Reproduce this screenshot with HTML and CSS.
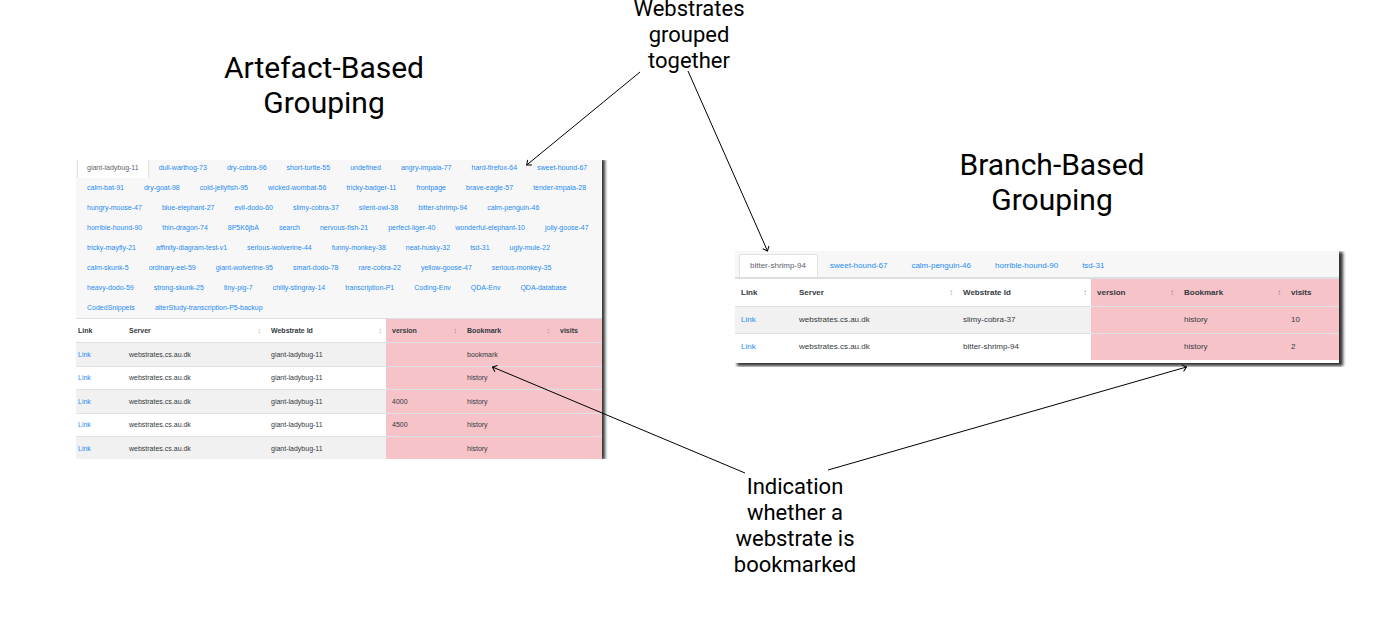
FILE: index.html
```html
<!DOCTYPE html>
<html lang="en">
<head>
<meta charset="utf-8">
<title>Webstrate grouping</title>
<link rel="stylesheet" href="styles.css">
</head>
<body>
<main class="canvas">
  <h1 class="title title-artefact">Artefact-Based<br>Grouping</h1>
  <h1 class="title title-branch">Branch-Based<br>Grouping</h1>

  <section class="panel panel-artefact">
    <nav class="tabs">
      <a class="active" href="#">giant-ladybug-11</a><a href="#">dull-warthog-73</a><a href="#">dry-cobra-96</a><a href="#">short-turtle-55</a><a href="#">undefined</a><a href="#">angry-impala-77</a><a href="#">hard-firefox-64</a><a href="#">sweet-hound-67</a>
      <a href="#">calm-bat-91</a><a href="#">dry-goat-98</a><a href="#">cold-jellyfish-95</a><a href="#">wicked-wombat-56</a><a href="#">tricky-badger-11</a><a href="#">frontpage</a><a href="#">brave-eagle-57</a><a href="#">tender-impala-28</a>
      <a href="#">hungry-moose-47</a><a href="#">blue-elephant-27</a><a href="#">evil-dodo-60</a><a href="#">slimy-cobra-37</a><a href="#">silent-owl-38</a><a href="#">bitter-shrimp-94</a><a href="#">calm-penguin-46</a>
      <a href="#">horrible-hound-90</a><a href="#">thin-dragon-74</a><a href="#">8P5K6jbA</a><a href="#">search</a><a href="#">nervous-fish-21</a><a href="#">perfect-liger-40</a><a href="#">wonderful-elephant-10</a><a href="#">jolly-goose-47</a>
      <a href="#">tricky-mayfly-21</a><a href="#">affinity-diagram-test-v1</a><a href="#">serious-wolverine-44</a><a href="#">funny-monkey-38</a><a href="#">neat-husky-32</a><a href="#">tsd-31</a><a href="#">ugly-mule-22</a>
      <a href="#">calm-skunk-5</a><a href="#">ordinary-eel-59</a><a href="#">giant-wolverine-95</a><a href="#">smart-dodo-78</a><a href="#">rare-cobra-22</a><a href="#">yellow-goose-47</a><a href="#">serious-monkey-35</a>
      <a href="#">heavy-dodo-59</a><a href="#">strong-skunk-25</a><a href="#">tiny-pig-7</a><a href="#">chilly-stingray-14</a><a href="#">transcription-P1</a><a href="#">Coding-Env</a><a href="#">QDA-Env</a><a href="#">QDA-database</a>
      <a href="#">CodedSnippets</a><a href="#">alterStudy-transcription-P5-backup</a>
    </nav>
    <table>
      <colgroup><col class="c-link"><col class="c-server"><col class="c-id"><col class="c-version"><col class="c-bookmark"><col></colgroup>
      <thead><tr><th>Link</th><th class="sort">Server</th><th class="sort">Webstrate Id</th><th class="sort">version</th><th class="sort">Bookmark</th><th>visits</th></tr></thead>
      <tbody>
        <tr><td><a href="#">Link</a></td><td>webstrates.cs.au.dk</td><td>giant-ladybug-11</td><td></td><td>bookmark</td><td></td></tr>
        <tr><td><a href="#">Link</a></td><td>webstrates.cs.au.dk</td><td>giant-ladybug-11</td><td></td><td>history</td><td></td></tr>
        <tr><td><a href="#">Link</a></td><td>webstrates.cs.au.dk</td><td>giant-ladybug-11</td><td>4000</td><td>history</td><td></td></tr>
        <tr><td><a href="#">Link</a></td><td>webstrates.cs.au.dk</td><td>giant-ladybug-11</td><td>4500</td><td>history</td><td></td></tr>
        <tr><td><a href="#">Link</a></td><td>webstrates.cs.au.dk</td><td>giant-ladybug-11</td><td></td><td>history</td><td></td></tr>
      </tbody>
    </table>
  </section>

  <section class="panel panel-branch">
    <nav class="tabs">
      <a class="active" href="#">bitter-shrimp-94</a><a href="#">sweet-hound-67</a><a href="#">calm-penguin-46</a><a href="#">horrible-hound-90</a><a href="#">tsd-31</a>
    </nav>
    <table>
      <colgroup><col class="c-link"><col class="c-server"><col class="c-id"><col class="c-version"><col class="c-bookmark"><col></colgroup>
      <thead><tr><th>Link</th><th class="sort">Server</th><th class="sort">Webstrate Id</th><th class="sort">version</th><th class="sort">Bookmark</th><th>visits</th></tr></thead>
      <tbody>
        <tr><td><a href="#">Link</a></td><td>webstrates.cs.au.dk</td><td>slimy-cobra-37</td><td></td><td>history</td><td>10</td></tr>
        <tr><td><a href="#">Link</a></td><td>webstrates.cs.au.dk</td><td>bitter-shrimp-94</td><td></td><td>history</td><td>2</td></tr>
      </tbody>
    </table>
  </section>

  <p class="note note-grouped">Webstrates<br>grouped<br>together</p>
  <p class="note note-bookmarked">Indication<br>whether a<br>webstrate is<br>bookmarked</p>

  <svg class="arrows" width="1377" height="621" viewBox="0 0 1377 621" aria-hidden="true">
    <defs>
      <marker id="head" markerUnits="userSpaceOnUse" markerWidth="8" markerHeight="10" refX="6" refY="5" orient="auto">
        <path d="M2 1.6 L6 5 L2 8.4"/>
      </marker>
    </defs>
    <path d="M640 72 L526.7 165"/>
    <path d="M688 71 L767.5 251"/>
    <path d="M745 473 L492.5 367"/>
    <path d="M828 470 L1186.5 367"/>
  </svg>
</main>
</body>
</html>
```
FILE: styles.css
```css
body {
  margin: 0;
  background: #fff;
  font-family: "Liberation Sans", Arial, sans-serif;
}

/* Free canvas: titles, panels and notes are pinned where the arrows meet them */
.canvas {
  position: relative;
  min-height: 100vh;
  overflow: hidden;
}

.title,
.note {
  position: absolute;
  margin: 0;
  color: #000;
  font-family: Roboto, sans-serif;
  font-weight: 400;
  text-align: center;
  white-space: nowrap;
  transform: translateX(-50%);
}

.title { font-size: 30px; line-height: 35px; }
.title-artefact { left: 324px; top: 50px; }
.title-branch { left: 1052px; top: 147px; }

.note { font-size: 22px; line-height: 26px; }
.note-grouped { left: 689px; top: -4px; }
.note-bookmarked { left: 795px; top: 474px; }

.arrows {
  position: absolute;
  left: 0;
  top: 0;
  pointer-events: none;
}

.arrows path {
  fill: none;
  stroke: #000;
  stroke-width: 1;
}

.arrows > path { marker-end: url(#head); }

.panel {
  position: absolute;
  background: #fff;
  color: #343a40;
}

.panel a { color: #1e8bf5; text-decoration: none; }

.tabs {
  display: flex;
  flex-wrap: wrap;
  background: #f7f7f7;
  border-bottom: 2px solid #dcdfe1;
}

.tabs .active {
  background: #fff;
  color: #5d6369;
  border: 1px solid #dee2e6;
  border-bottom: 0;
}

table {
  width: 100%;
  table-layout: fixed;
  border-collapse: collapse;
}

th, td {
  box-sizing: border-box;
  padding: 0 4px 0 6px;
  text-align: left;
  white-space: nowrap;
}

tbody tr:nth-child(odd) { background: #f1f1f1; }
tbody td { border-top: 1px solid #dee2e6; }
th:nth-child(n+4), td:nth-child(n+4) { background: #f6c3c9; }

.sort::after {
  content: "↕";
  float: right;
  color: #212529;
  font-weight: 400;
  opacity: 0.4;
}

.panel-artefact {
  left: 76px;
  top: 160px;
  width: 526px;
  height: 299px;
  font-size: 7px;
  box-shadow: 2px 0 3px 1px #333;
  clip-path: inset(0 -6px 0 0);
}

.panel-artefact .tabs {
  margin-top: -2px;
  padding: 0 1px;
  border-bottom-width: 1px;
}
.panel-artefact .tabs a { padding: 0 10px; line-height: 20px; }
.panel-artefact .tabs .active { padding: 0 9px; border-top: 0; }
.panel-artefact th { height: 23px; }
.panel-artefact td { height: 24px; }
.panel-artefact tr:nth-child(even) td { height: 23px; }
.panel-artefact th:first-child,
.panel-artefact td:first-child { padding-left: 2px; }
.panel-artefact .c-link { width: 47px; }
.panel-artefact .c-server { width: 142px; }
.panel-artefact .c-id { width: 121px; }
.panel-artefact .c-version { width: 75px; }
.panel-artefact .c-bookmark { width: 93px; }

.panel-branch {
  left: 735px;
  top: 251px;
  width: 604px;
  padding-bottom: 3px;
  box-sizing: border-box;
  font-size: 8px;
  box-shadow: 3px 2px 3px 1px #333;
  clip-path: inset(0 -7px -4px 0);
}

.panel-branch .tabs { padding: 3px 4px 0; }
.panel-branch .tabs a { padding: 0 12px; line-height: 23px; }
.panel-branch .tabs .active {
  padding: 0 11px 0 10px;
  line-height: 22px;
  border-radius: 2px 2px 0 0;
}
.panel-branch th, .panel-branch td { height: 27px; }
.panel-branch .c-link { width: 58px; }
.panel-branch .c-server { width: 164px; }
.panel-branch .c-id { width: 134px; }
.panel-branch .c-version { width: 87px; }
.panel-branch .c-bookmark { width: 107px; }
```
